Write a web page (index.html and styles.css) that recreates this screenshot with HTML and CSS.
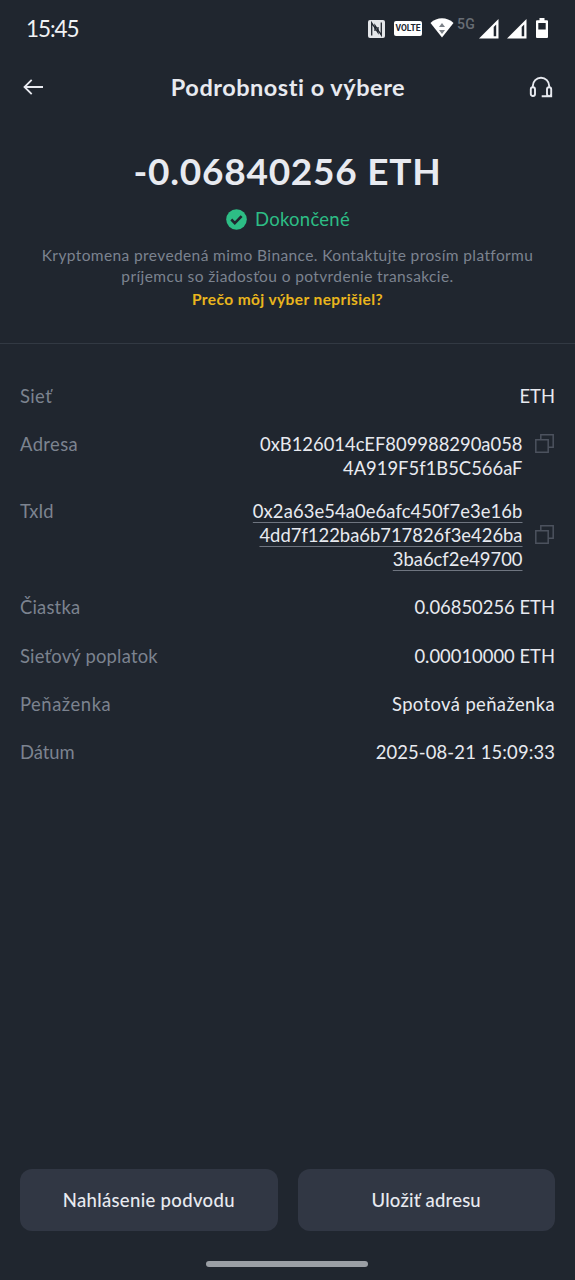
FILE: index.html
```html
<!DOCTYPE html>
<html lang="sk">
<head>
<meta charset="utf-8">
<title>Podrobnosti o výbere</title>
<link rel="stylesheet" href="styles.css">
</head>
<body>
<div class="screen">
  <div class="status">
    <span class="clock">15:45</span>
    <div class="indicators">
      <svg class="nfc" width="17" height="18" viewBox="0 0 17 18"><rect width="17" height="18" rx="2" fill="#e4e6e9"/><path d="M3.700 15.500V3l6.300 9.500V7" fill="none" stroke="#20262f" stroke-width="1.300"/><path d="M13.300 2.500V15L7 5.500V11" fill="none" stroke="#20262f" stroke-width="1.300"/></svg>
      <span class="volte">VOLTE</span>
      <svg class="wifi" width="24" height="20" viewBox="0 0 24 20"><path d="M.5 5C7-1.2 17-1.2 23.500 5L12 19.500z" fill="#fff"/><path d="M12 5l3 4H9zM12 16l3-4H9z" fill="#7b8087"/></svg>
      <span class="net">5G</span>
      <svg class="sig" width="20" height="20" viewBox="0 0 20 20"><path d="M19.500 0v19.500H0z" fill="#fff"/><path d="M14.700 8l2.500-2.600v11.800h-2.500z" fill="#20262f"/></svg>
      <svg class="sig" width="20" height="20" viewBox="0 0 20 20"><path d="M19.500 0v19.500H0z" fill="#fff"/><path d="M14.700 8l2.500-2.600v11.800h-2.500z" fill="#20262f"/></svg>
      <svg class="bat" width="12" height="20" viewBox="0 0 12 20"><path d="M3.500 0h5v2.300H11q1 0 1 1V19q0 1-1 1H1q-1 0-1-1V3.300q0-1 1-1h2.500z" fill="#fff"/><path d="M2.300 5h7.400v6.500H2.300z" fill="#20262f"/></svg>
    </div>
  </div>

  <header class="bar">
    <svg width="20" height="16" viewBox="0 0 20 16" fill="none" stroke="#e8eaf0" stroke-width="1.8"><path d="M20 8H1.500M8.700.8L1.500 8l7.200 7.200"/></svg>
    <h1 class="title">Podrobnosti o výbere</h1>
    <svg width="24" height="22" viewBox="0 0 24 22" fill="none" stroke="#e8eaf0" stroke-width="1.9"><path d="M3.800 11.500V10a8.200 8.200 0 0 1 16.400 0v1.500"/><rect x="1.800" y="11.300" width="4.200" height="8.700" rx="2"/><path d="M22.200 13.300a2.100 2.100 0 0 0-4.200 0V18a2.100 2.100 0 0 0 4.200 0zM22.200 17v3.200h-9.500"/></svg>
  </header>

  <section class="summary">
    <div class="amount">-0.06840256 ETH</div>
    <div class="state">
      <svg width="21" height="21" viewBox="0 0 21 21"><circle cx="10.500" cy="10.500" r="10.300" fill="#2dbd85"/><path d="M5.300 10.500l3.500 3.600 6.800-7" fill="none" stroke="#20262f" stroke-width="2.600"/></svg>
      <span class="done">Dokončené</span>
    </div>
    <p class="note">Kryptomena prevedená mimo Binance. Kontaktujte prosím platformu<br>príjemcu so žiadosťou o potvrdenie transakcie.</p>
    <a class="help">Prečo môj výber neprišiel?</a>
  </section>

  <dl class="details">
    <div class="row"><dt class="l-net">Sieť</dt><dd>ETH</dd></div>
    <div class="row address"><dt class="l-address">Adresa</dt><dd>0xB126014cEF809988290a058<br>4A919F5f1B5C566aF</dd>
      <svg class="copy" width="19" height="19" viewBox="0 0 19 19" fill="none" stroke="#4c525e" stroke-width="1.500"><path d="M.8 5.800h12.400v12.400H.8zM5.800 5.800V.8h12.400v12.400h-5"/></svg></div>
    <div class="row tx"><dt>TxId</dt><dd><span class="hash t1">0x2a63e54a0e6afc450f7e3e16b</span><br><span class="hash">4dd7f122ba6b717826f3e426ba</span><br><span class="hash">3ba6cf2e49700</span></dd>
      <svg class="copy" width="19" height="19" viewBox="0 0 19 19" fill="none" stroke="#4c525e" stroke-width="1.500"><path d="M.8 5.800h12.400v12.400H.8zM5.800 5.800V.8h12.400v12.400h-5"/></svg></div>
    <div class="row"><dt class="l-amount">Čiastka</dt><dd>0.06850256 ETH</dd></div>
    <div class="row"><dt class="l-fee">Sieťový poplatok</dt><dd>0.00010000 ETH</dd></div>
    <div class="row"><dt class="l-wallet">Peňaženka</dt><dd class="wallet">Spotová peňaženka</dd></div>
    <div class="row"><dt>Dátum</dt><dd class="date">2025-08-21 15:09:33</dd></div>
  </dl>

  <footer class="actions">
    <button class="btn report">Nahlásenie podvodu</button>
    <button class="btn save">Uložiť adresu</button>
  </footer>
  <div class="home"></div>
</div>
</body>
</html>
```
FILE: styles.css
```css
* { box-sizing: border-box; }
body { margin: 0; background: #20262f; color: #e8eaf0; font-family: Lato, "Open Sans", sans-serif; }
.screen { width: 575px; height: 1280px; display: flex; flex-direction: column; overflow: hidden; }

.status { height: 56px; flex: none; display: flex; justify-content: space-between; padding: 0 27px 0 26px; }
.clock { font-size: 22.5px; line-height: 57px; letter-spacing: -1.1px; color: #f1f2f4; }
.indicators { display: flex; align-items: flex-start; }
.nfc { margin: 20px 9px 0 0; }
.volte { width: 28px; height: 15px; margin: 21px 8px 0 0; border-radius: 2px; background: #fff; color: #20262f; font: bold 8.5px/15px Roboto, sans-serif; text-align: center; }
.wifi { margin: 18px 3px 0 0; }
.net { width: 18px; margin: 16px 4px 0 0; font: 500 14px/16px Roboto, sans-serif; letter-spacing: .3px; color: #686d75; }
.sig { margin: 19px 8px 0 0; }
.bat { margin: 18px 0 0 1px; }

.bar { height: 62px; flex: none; display: flex; align-items: center; justify-content: space-between; padding: 0 22px 0 23px; }
.title { margin: 0 0 0 4px; font-size: 23.5px; line-height: 32px; font-weight: 700; letter-spacing: .52px; }

.summary { height: 226px; flex: none; display: flex; flex-direction: column; align-items: center; padding-top: 30px; border-bottom: 1px solid #323943; }
.amount { font-size: 37px; line-height: 46px; font-weight: 700; letter-spacing: .75px; white-space: nowrap; }
.state { display: flex; align-items: center; gap: 8px; height: 24px; margin: 13px 0 0 1px; }
.done { font-size: 18.5px; line-height: 24px; letter-spacing: .25px; color: #2dbd85; }
.note { margin: 14px 0 0; font-size: 15.5px; line-height: 21px; letter-spacing: .39px; color: #7c838f; text-align: center; white-space: nowrap; }
.help { margin-top: 2px; font-size: 15.5px; line-height: 21px; letter-spacing: .4px; font-weight: 700; color: #e9b51d; }

.details { margin: 40px 20px 0; display: flex; flex-direction: column; font-size: 18.4px; line-height: 24px; }
.row { display: flex; margin-bottom: 24.4px; }
.row:first-child { margin-bottom: 24px; }
dt { color: #7c838f; flex: 1; }
dd { margin: 0; text-align: right; white-space: nowrap; }
.copy { flex: none; margin: 0 1px 0 12.5px; }
.details .address { margin-bottom: 19px; }
.address .copy { margin-top: 2px; }
.details .tx { margin-bottom: 24.2px; }
.tx .copy { align-self: center; margin-bottom: 2px; }
.hash { text-decoration: underline; text-decoration-color: #6f7580; text-decoration-thickness: 1px; text-underline-offset: 4px; }
.t1 { letter-spacing: .1px; }
.l-net, .l-address { letter-spacing: .4px; }
.l-amount, .l-fee { letter-spacing: .2px; }
.l-wallet { letter-spacing: .55px; }
.wallet { letter-spacing: .4px; }
.date { letter-spacing: .13px; }

.actions { margin: auto 20px 0; display: grid; grid-template-columns: 1fr 1fr; gap: 20px; }
.btn { height: 62px; border: 0; border-radius: 12px; background: #313744; color: #e8eaf0; font: 500 18.5px/24px Lato, "Open Sans", sans-serif; }
.report { letter-spacing: .33px; }
.save { letter-spacing: .2px; }
.home { width: 162px; height: 6px; margin: 30px 0 13px 206px; flex: none; border-radius: 3px; background: #9b9fa5; }
```
